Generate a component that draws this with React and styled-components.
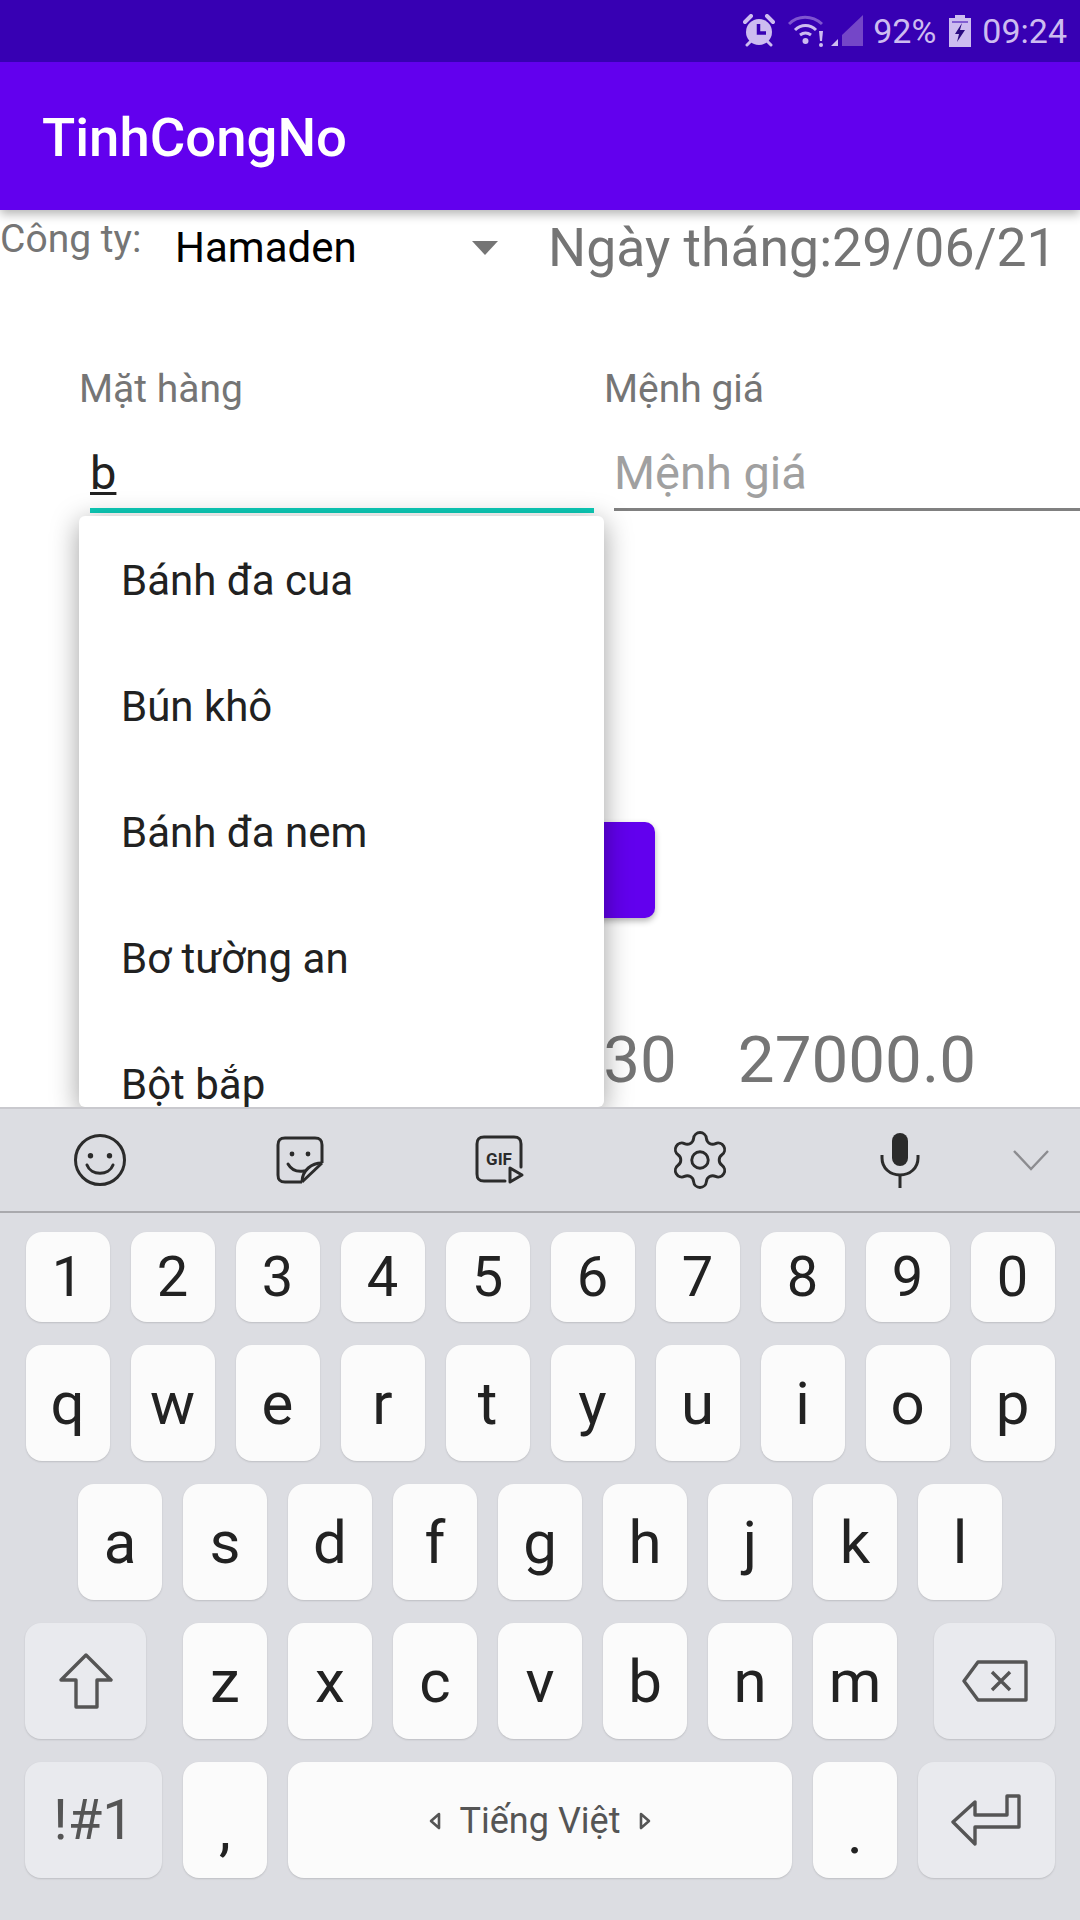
import React from 'react';
import styled, { createGlobalStyle } from 'styled-components';
import { Settings } from 'lucide-react';

const GlobalStyle = createGlobalStyle`
  html, body {
    margin: 0;
    padding: 0;
    background: #fff;
    font-family: Roboto, "Noto Sans", sans-serif;
  }
  * { box-sizing: border-box; }
`;

const Page = styled.div`
  width: 1080px;
  height: 1920px;
  display: flex;
  flex-direction: column;
  overflow: hidden;
`;

const StatusBar = styled.div`
  height: 62px;
  flex-shrink: 0;
  background: #3700b3;
  color: #cdbcf0;
  display: flex;
  justify-content: flex-end;
  align-items: center;
  padding-right: 13px;
  font-size: 34px;
  position: relative;
  z-index: 3;
`;

const StatusIcon = styled.svg`
  display: block;
  flex-shrink: 0;
  margin-right: ${p => p.$mr}px;
`;

const StatusText = styled.span`
  margin-right: ${p => p.$mr || 0}px;
`;

const AppBar = styled.div`
  height: 148px;
  flex-shrink: 0;
  background: #6200ee;
  color: #fff;
  display: flex;
  align-items: center;
  padding: 2px 0 0 42px;
  font-size: 54.5px;
  font-weight: 500;
  box-shadow: 0 4px 10px rgba(0, 0, 0, 0.3);
  position: relative;
  z-index: 2;
`;

const Content = styled.div`
  flex: 1;
  min-height: 0;
  position: relative;
  overflow: hidden;
  background: #fff;
`;

const TopRow = styled.div`
  display: flex;
  height: 100px;
  align-items: flex-start;
`;

const CompanyLabel = styled.div`
  width: 175px;
  padding-top: 7px;
  font-size: 39px;
  line-height: 44px;
  color: #757575;
`;

const Spinner = styled.div`
  width: 373px;
  display: flex;
  align-items: center;
  justify-content: space-between;
  padding: 13px 50px 0 0;
  font-size: 42px;
  line-height: 50px;
  color: #000;
`;

const SpinnerArrow = styled.div`
  width: 0;
  height: 0;
  border-left: 13px solid transparent;
  border-right: 13px solid transparent;
  border-top: 14px solid #757575;
`;

const DateText = styled.div`
  font-size: 53.5px;
  line-height: 64px;
  padding-top: 6px;
  color: #757575;
  white-space: nowrap;
`;

const FormRow = styled.div`
  display: grid;
  grid-template-columns: 525px 1fr;
  padding-left: 79px;
  margin-top: 55px;
`;

const Field = styled.div`
  display: flex;
  flex-direction: column;
`;

const FieldLabel = styled.div`
  font-size: 39px;
  line-height: 48px;
  color: #757575;
`;

const InputBox = styled.div`
  margin: 26px 10px 0 11px;
  height: 74px;
  padding-top: 6px;
  font-size: 47px;
  line-height: 56px;
  color: #212121;
  border-bottom: 5px solid #0dcdb9;
`;

const PlaceholderBox = styled.div`
  margin: 26px 0 0 10px;
  height: 72px;
  padding-top: 6px;
  font-size: 47px;
  line-height: 56px;
  color: #a0a0a0;
  border-bottom: 3px solid #808080;
`;

const Composing = styled.span`
  text-decoration: underline;
  text-decoration-thickness: 3px;
  text-underline-offset: 3px;
`;

const ActionRow = styled.div`
  display: flex;
  justify-content: flex-end;
  width: 655px;
  margin-top: 309px;
`;

const ActionButton = styled.div`
  width: 240px;
  height: 96px;
  background: #6200ee;
  border-radius: 10px;
  box-shadow: 0 3px 6px rgba(0, 0, 0, 0.3);
`;

const TotalsRow = styled.div`
  display: flex;
  justify-content: flex-end;
  width: 976px;
  gap: 61px;
  margin-top: 103px;
  font-size: 65.5px;
  line-height: 78px;
  color: #757575;
`;

const Dropdown = styled.div`
  position: absolute;
  left: 79px;
  top: 306px;
  width: 525px;
  bottom: 0;
  padding-top: 1px;
  background: #fff;
  border-radius: 6px;
  overflow: hidden;
  box-shadow: 0 6px 28px rgba(0, 0, 0, 0.38);
`;

const DropdownItem = styled.div`
  height: 126px;
  padding-left: 42px;
  display: flex;
  align-items: center;
  font-size: 42px;
  color: #212121;
`;

const Keyboard = styled.div`
  height: 813px;
  flex-shrink: 0;
  background: #dcdde2;
  border-top: 2px solid #c9c9ce;
  position: relative;
  z-index: 1;
`;

const ToolBar = styled.div`
  height: 104px;
  border-bottom: 2px solid #a9a9ad;
  display: grid;
  grid-template-columns: repeat(5, 200px) 62px;
  align-items: center;
  justify-items: center;
`;

const ToolSlot = styled.div`
  display: flex;
  align-items: center;
  justify-content: center;
  width: 100%;
`;

const Keys = styled.div`
  display: flex;
  flex-direction: column;
  align-items: center;
  padding-top: 19px;
`;

const KeyRow = styled.div`
  display: flex;
  justify-content: ${p => (p.$spread ? 'space-between' : 'center')};
  gap: 21px;
  width: 1080px;
  padding: 0 25px;
  margin-bottom: 23px;
`;

const KeyGroup = styled.div`
  display: flex;
  gap: 21px;
`;

const Key = styled.div`
  width: ${p => p.$w || 84}px;
  height: ${p => p.$h || 116}px;
  flex-shrink: 0;
  border-radius: 16px;
  background: ${p => (p.$fn ? '#e9eaee' : '#fbfbfb')};
  box-shadow: 0 1px 2px rgba(0, 0, 0, 0.14);
  display: flex;
  align-items: center;
  justify-content: center;
  padding-top: ${p => p.$drop || 0}px;
  font-size: ${p => p.$size || 60}px;
  color: ${p => (p.$fn ? '#555' : '#222')};
`;

const SpaceLabel = styled.div`
  display: flex;
  align-items: center;
  gap: 19px;
  font-size: 36px;
  color: #555;
`;

const AlarmIcon = () => (
  <StatusIcon $mr={13} width="32" height="34" viewBox="0 0 32 34">
    <circle cx="16" cy="18" r="13" fill="#cdbcf0" />
    <path d="M2 8 L8 2 M30 8 L24 2" stroke="#cdbcf0" strokeWidth="4" strokeLinecap="round" />
    <path d="M4 31 L8 27 M28 31 L24 27" stroke="#cdbcf0" strokeWidth="3" strokeLinecap="round" />
    <path d="M15.5 10 V19 H23" stroke="#3700b3" strokeWidth="3.5" fill="none" />
  </StatusIcon>
);

const WifiIcon = () => (
  <StatusIcon $mr={5} width="38" height="32" viewBox="0 0 38 32">
    <path d="M1 9 C10 0 24 0 34 9" stroke="#7f55d0" strokeWidth="3" fill="none" />
    <path d="M7 15 C13 9 22 9 28 15" stroke="#cdbcf0" strokeWidth="3" fill="none" />
    <path d="M12 20 C16 17 19 17 23 20" stroke="#cdbcf0" strokeWidth="3" fill="none" />
    <circle cx="17.5" cy="26" r="3" fill="#cdbcf0" />
    <path d="M31 16 H35 L34 26 H32 Z" fill="#cdbcf0" />
    <circle cx="33" cy="30" r="2" fill="#cdbcf0" />
  </StatusIcon>
);

const SignalIcon = () => (
  <StatusIcon $mr={10} width="32" height="32" viewBox="0 0 32 32">
    <path d="M0 31 L7 24 V31 Z" fill="#cdbcf0" />
    <path d="M11 20 L32 0 V31 H11 Z" fill="#7446c8" />
  </StatusIcon>
);

const BatteryIcon = () => (
  <StatusIcon $mr={11} width="22" height="32" viewBox="0 0 22 32">
    <path d="M6 0 H16 V3 H22 V32 H0 V3 H6 Z" fill="#cdbcf0" />
    <path d="M3 7 H19" stroke="#3700b3" strokeWidth="1" />
    <path d="M13 8 L6 19 H10 L8 27 L16 15 H11 Z" fill="#2a0a80" />
  </StatusIcon>
);

const SmileIcon = () => (
  <svg width="54" height="54" viewBox="0 0 54 54" fill="none" stroke="#2b2b2b" strokeWidth="3">
    <circle cx="27" cy="27" r="24.5" />
    <circle cx="17.5" cy="22.7" r="2.7" fill="#2b2b2b" stroke="none" />
    <circle cx="36.5" cy="22.7" r="2.7" fill="#2b2b2b" stroke="none" />
    <path d="M14 32 C18 43 36 43 40 32" strokeLinecap="round" />
  </svg>
);

const StickerIcon = () => (
  <svg width="48" height="48" viewBox="0 0 48 48" fill="none" stroke="#2b2b2b" strokeWidth="3" strokeLinejoin="round">
    <path d="M26 46 H9 C4 46 2 44 2 39 V9 C2 4 4 2 9 2 H39 C44 2 46 4 46 9 V27" />
    <path d="M46 27 L26 46" />
    <path d="M46 27 C36 27 26 34 26 46" />
    <circle cx="16" cy="18" r="2.4" fill="#2b2b2b" stroke="none" />
    <circle cx="32" cy="18" r="2.4" fill="#2b2b2b" stroke="none" />
    <path d="M12 28 C16 35 22 36 28 35" strokeLinecap="round" />
  </svg>
);

const GifIcon = () => (
  <svg width="50" height="50" viewBox="0 0 50 50" fill="none" stroke="#2b2b2b" strokeWidth="3">
    <path d="M30 46 H9 C4 46 2 44 2 39 V9 C2 4 4 2 9 2 H39 C44 2 46 4 46 9 V32" strokeLinecap="round" />
    <path d="M35 33 V47 L47 40 Z" strokeLinejoin="round" />
    <text x="24" y="30" textAnchor="middle" fontFamily="Roboto, sans-serif" fontWeight="700" fontSize="17" fill="#2b2b2b" stroke="none">GIF</text>
  </svg>
);

const MicIcon = () => (
  <svg width="42" height="56" viewBox="0 0 42 56" fill="none" stroke="#2b2b2b" strokeWidth="3">
    <rect x="13" y="1" width="16" height="33" rx="8" fill="#2b2b2b" stroke="none" />
    <path d="M3 23 V26 C3 36 11 43 21 43 C31 43 39 36 39 26 V23" />
    <path d="M21 43 V56" />
  </svg>
);

const ChevronIcon = () => (
  <svg width="36" height="22" viewBox="0 0 36 22" fill="none" stroke="#8c8c90" strokeWidth="2.4">
    <path d="M1 2 L18 20 L35 2" />
  </svg>
);

const ShiftIcon = () => (
  <svg width="54" height="56" viewBox="0 0 54 56" fill="none" stroke="#555" strokeWidth="3.4" strokeLinejoin="round">
    <path d="M27 2 L52 27 H38 V54 H17 V27 H2 Z" />
  </svg>
);

const BackspaceIcon = () => (
  <svg width="66" height="42" viewBox="0 0 66 42" fill="none" stroke="#555" strokeWidth="3.4" strokeLinejoin="round">
    <path d="M16 2 H64 V40 H16 L2 21 Z" />
    <path d="M30 12 L48 30 M48 12 L30 30" />
  </svg>
);

const EnterIcon = () => (
  <svg width="72" height="52" viewBox="0 0 72 52" fill="none" stroke="#555" strokeWidth="3.4" strokeLinejoin="round">
    <path d="M68 2 V33 H24 V50 L2 28 L24 8 V21 H56 V2 Z" />
  </svg>
);

const SpaceArrow = ({ flip }) => (
  <svg width="12" height="18" viewBox="0 0 12 18" fill="none" stroke="#555" strokeWidth="2.6">
    <path d={flip ? 'M2 2 L10 9 L2 16 Z' : 'M10 2 L2 9 L10 16 Z'} strokeLinejoin="round" />
  </svg>
);

const suggestions = ['Bánh đa cua', 'Bún khô', 'Bánh đa nem', 'Bơ tường an', 'Bột bắp'];

export default function App() {
  return (
    <Page>
      <GlobalStyle />
      <StatusBar>
        <AlarmIcon />
        <WifiIcon />
        <SignalIcon />
        <StatusText $mr={13}>92%</StatusText>
        <BatteryIcon />
        <StatusText>09:24</StatusText>
      </StatusBar>
      <AppBar>TinhCongNo</AppBar>
      <Content>
        <TopRow>
          <CompanyLabel>Công ty:</CompanyLabel>
          <Spinner>
            Hamaden
            <SpinnerArrow />
          </Spinner>
          <DateText>Ngày tháng:29/06/21</DateText>
        </TopRow>
        <FormRow>
          <Field>
            <FieldLabel>Mặt hàng</FieldLabel>
            <InputBox><Composing>b</Composing></InputBox>
          </Field>
          <Field>
            <FieldLabel>Mệnh giá</FieldLabel>
            <PlaceholderBox>Mệnh giá</PlaceholderBox>
          </Field>
        </FormRow>
        <ActionRow><ActionButton /></ActionRow>
        <TotalsRow>
          <span>30</span>
          <span>27000.0</span>
        </TotalsRow>
        <Dropdown>
          {suggestions.map(item => (
            <DropdownItem key={item}>{item}</DropdownItem>
          ))}
        </Dropdown>
      </Content>
      <Keyboard>
        <ToolBar>
          <ToolSlot><SmileIcon /></ToolSlot>
          <ToolSlot><StickerIcon /></ToolSlot>
          <ToolSlot><GifIcon /></ToolSlot>
          <ToolSlot><Settings size={66} strokeWidth={1.05} color="#2b2b2b" /></ToolSlot>
          <ToolSlot><MicIcon /></ToolSlot>
          <ToolSlot><ChevronIcon /></ToolSlot>
        </ToolBar>
        <Keys>
          <KeyRow>
            {'1234567890'.split('').map(k => <Key key={k} $h={90} $size={56}>{k}</Key>)}
          </KeyRow>
          <KeyRow>
            {'qwertyuiop'.split('').map(k => <Key key={k}>{k}</Key>)}
          </KeyRow>
          <KeyRow>
            {'asdfghjkl'.split('').map(k => <Key key={k}>{k}</Key>)}
          </KeyRow>
          <KeyRow $spread>
            <Key $fn $w={121}><ShiftIcon /></Key>
            <KeyGroup>
              {'zxcvbnm'.split('').map(k => <Key key={k}>{k}</Key>)}
            </KeyGroup>
            <Key $fn $w={121}><BackspaceIcon /></Key>
          </KeyRow>
          <KeyRow>
            <Key $fn $w={137} $size={56}>!#1</Key>
            <Key $drop={16}>,</Key>
            <Key $w={504} $drop={2}>
              <SpaceLabel><SpaceArrow />Tiếng Việt<SpaceArrow flip /></SpaceLabel>
            </Key>
            <Key $drop={24}>.</Key>
            <Key $fn $w={137}><EnterIcon /></Key>
          </KeyRow>
        </Keys>
      </Keyboard>
    </Page>
  );
}
